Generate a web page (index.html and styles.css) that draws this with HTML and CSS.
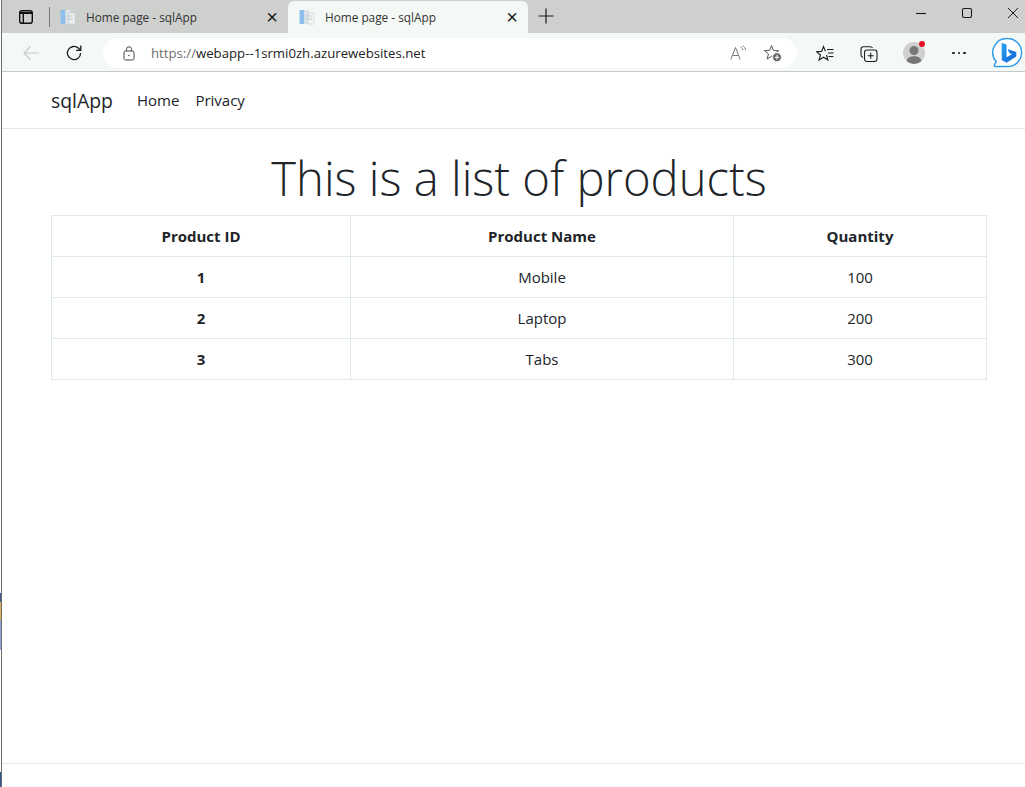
FILE: index.html
```html
<!DOCTYPE html>
<html lang="en">

<head>
  <meta charset="UTF-8" />
  <title>Home page - sqlApp</title>
  <link rel="stylesheet" href="styles.css">
</head>

<body>
  <div class="screen">
    <div class="desktop-edge"></div>

    <div class="browser">
      <!-- tabs -->
      <div class="tab-strip">
        <div class="tab-actions">
          <svg class="icon" width="16" height="16" viewBox="0 0 16 16" fill="none" stroke="#111" stroke-width="1.4">
            <rect x="1.7" y="1.7" width="12.6" height="12.6" rx="2.4" />
            <path d="M1.7 4h12.600" stroke-width="2" />
            <path d="M5.300 4.500v9.800" />
          </svg>
          <span class="tab-divider"></span>
        </div>

        <div class="tab">
          <svg class="favicon" width="16" height="16" viewBox="0 0 16 16">
            <rect x="0.5" y="1" width="5" height="14" fill="#8cc0ea" />
            <rect x="5.5" y="1" width="5" height="14" fill="#dde3e6" />
            <rect x="9" y="4" width="6" height="11" fill="#edf0f1" stroke="#c7ced2" stroke-width="0.6" />
            <path d="M7 7h6M7 10h6" stroke="#bcc5ca" stroke-width="1" />
          </svg>
          <span class="tab-title">Home page - sqlApp</span>
          <span class="tab-close">×</span>
        </div>

        <div class="tab tab-active">
          <svg class="favicon" width="16" height="16" viewBox="0 0 16 16">
            <rect x="0.5" y="1" width="5" height="14" fill="#8cc0ea" />
            <rect x="5.5" y="1" width="5" height="14" fill="#dde3e6" />
            <rect x="9" y="4" width="6" height="11" fill="#f4f6f7" stroke="#c7ced2" stroke-width="0.6" />
            <path d="M7 7h6M7 10h6" stroke="#bcc5ca" stroke-width="1" />
          </svg>
          <span class="tab-title">Home page - sqlApp</span>
          <span class="tab-close">×</span>
        </div>

        <svg class="new-tab" width="16" height="16" viewBox="0 0 16 16" stroke="#1b1b1b" stroke-width="1.2">
          <path d="M8 .5v15M.5 8h15" />
        </svg>

        <div class="window-controls">
          <svg width="12" height="12" viewBox="0 0 12 12" stroke="#1b1b1b" stroke-width="1.1"><path d="M1 6.500h10" /></svg>
          <svg width="12" height="12" viewBox="0 0 12 12" fill="none" stroke="#1b1b1b" stroke-width="1.1"><rect x="1.500" y="1.500" width="9" height="9" rx="1.500" /></svg>
          <svg width="12" height="12" viewBox="0 0 12 12" stroke="#1b1b1b" stroke-width="1"><path d="M1 1l10 10M11 1L1 11" /></svg>
        </div>
      </div>

      <!-- address bar -->
      <div class="toolbar">
        <svg class="nav-back" width="18" height="16" viewBox="0 0 18 16" fill="none" stroke="#c4c8c8" stroke-width="1.2">
          <path d="M17 8H2M8.500 1.500L2 8l6.500 6.500" />
        </svg>
        <svg class="nav-reload" width="18" height="18" viewBox="0 0 18 18" fill="none" stroke="#1b1b1b" stroke-width="1.3">
          <path d="M15.600 9a6.600 6.600 0 1 1-2-4.700l2 1.900" />
          <path d="M15.800 1.600v4.700h-4.700" />
        </svg>

        <div class="address-bar">
          <svg class="lock" width="12" height="15" viewBox="0 0 12 15" fill="none" stroke="#444" stroke-width="1">
            <rect x="1" y="5" width="10" height="9" rx="1.600" />
            <path d="M3.400 5V3.400a2.600 2.600 0 0 1 5.200 0V5" />
            <circle cx="6" cy="9.500" r=".8" fill="#444" stroke="none" />
          </svg>
          <span class="url"><span class="url-scheme">https://</span>webapp--1srmi0zh.azurewebsites.net</span>
          <span class="address-icons">
            <svg width="17" height="16" viewBox="0 0 17 16" fill="none" stroke="#777" stroke-width="1">
              <path d="M.8 14.500L5.500 2.500l4.700 12M2.500 10.500h6" />
              <path d="M10.500 1.800c1.400.7 2.200 1.900 2.400 3.400M12.800.8c1.600 1 2.600 2.500 2.800 4.300" />
            </svg>
            <svg width="18" height="18" viewBox="0 0 18 18" fill="none" stroke="#555" stroke-width="1">
              <path d="M7.500 1.500l1.900 4.900 5.200.3-4.100 3.300 1.400 5.100-4.400-2.900-4.400 2.900 1.400-5.100L.4 6.700l5.200-.3z" />
              <circle cx="13" cy="13.300" r="4.500" fill="#666" stroke="#f5f9f6" />
              <path d="M13 11v4.600M10.700 13.300h4.600" stroke="#fff" />
            </svg>
          </span>
        </div>

        <div class="toolbar-icons">
          <svg width="18" height="17" viewBox="0 0 18 17" fill="none" stroke="#1b1b1b" stroke-width="1.1">
            <path d="M10.500 10l1.400 5-4.400-2.800-4.400 2.800 1.400-5-4.100-3.300 5.200-.3 1.900-4.900 1.900 4.900" />
            <path d="M11 4.500h6.500M12 8h5.500M12.500 11.500h5" />
          </svg>
          <svg width="18" height="17" viewBox="0 0 18 17" fill="none" stroke="#1b1b1b" stroke-width="1.1">
            <path d="M3 12.500C1.600 12 1 11 1 10V4.200C1 2.700 2 1.700 3.500 1.700h6.800c1 0 1.800.5 2.200 1.300" />
            <rect x="4.500" y="5" width="12.500" height="11.500" rx="2.500" />
            <path d="M10.700 7.800v6M7.700 10.800h6" />
          </svg>
          <span class="avatar">
            <svg width="22" height="22" viewBox="0 0 22 22">
              <circle cx="11" cy="11" r="11" fill="#d0d0d0" />
              <circle cx="11" cy="8.500" r="4.500" fill="#767676" />
              <path d="M3.500 19c1-3.500 4-4.800 7.500-4.800s6.500 1.300 7.500 4.800a11 11 0 0 1-15 0z" fill="#767676" />
            </svg>
            <span class="avatar-dot"></span>
          </span>
          <span class="more-dots"><i></i><i></i><i></i></span>
        </div>

        <svg class="bing" width="31" height="32" viewBox="0 0 32 33">
          <defs>
            <linearGradient id="bing-fill" x1="0" y1="0" x2="1" y2="1">
              <stop offset="0" stop-color="#2aa4f0" />
              <stop offset="1" stop-color="#1160d8" />
            </linearGradient>
          </defs>
          <path d="M16 1.500a14.500 14.500 0 0 1 0 29H3.500c-1 0-1.500-1-1-1.800l1.800-3.300A14.500 14.500 0 0 1 16 1.500z" fill="#fff" stroke="#2f9bea" stroke-width="1.500" />
          <path d="M10 6l5 1.700v13.300l5.500-3.200-2.700-1.300-1.700-4.200 9 3.100v4.600L15 26.500l-5-2.800z" fill="url(#bing-fill)" />
        </svg>
      </div>

      <!-- page -->
      <header class="navbar">
        <a class="brand">sqlApp</a>
        <a class="nav-link">Home</a>
        <a class="nav-link">Privacy</a>
      </header>

      <main class="content">
        <h1>This is a list of products</h1>
        <table class="products">
          <thead>
            <tr>
              <th class="col-id">Product ID</th>
              <th class="col-name">Product Name</th>
              <th>Quantity</th>
            </tr>
          </thead>
          <tbody>
            <tr>
              <th>1</th>
              <td>Mobile</td>
              <td>100</td>
            </tr>
            <tr>
              <th>2</th>
              <td>Laptop</td>
              <td>200</td>
            </tr>
            <tr>
              <th>3</th>
              <td>Tabs</td>
              <td>300</td>
            </tr>
          </tbody>
        </table>
      </main>

      <footer class="page-footer"></footer>
    </div>
  </div>
</body>

</html>
```

FILE: styles.css
```css
* {
  box-sizing: border-box;
}

body {
  margin: 0;
  background: #fff;
  color: #212529;
  font-family: 'Open Sans', sans-serif;
  overflow: hidden;
}

.screen {
  display: flex;
  height: 787px;
}

.desktop-edge {
  width: 2px;
  flex: none;
  background: linear-gradient(#fff 0 593px, #3f5f9a 593px 602px, #e0b060 602px 620px, #8fa6d8 620px 650px, #fff 650px 772px, #2f5590 772px);
  border-right: 1px solid #6d6d6d;
}

.browser {
  flex: 1;
  min-width: 0;
  display: flex;
  flex-direction: column;
}

/* browser chrome */
.tab-strip {
  height: 33px;
  display: flex;
  align-items: flex-end;
  background: #cdd0cd;
}

.tab-actions {
  width: 56px;
  height: 33px;
  display: flex;
  align-items: center;
  padding-left: 16px;
  gap: 15px;
  flex: none;
}

.tab-divider {
  width: 1px;
  height: 20px;
  background: #77797a;
}

.tab {
  width: 230px;
  height: 33px;
  display: flex;
  align-items: center;
  padding: 0 10px 0 2px;
  font-size: 11.800px;
  color: #333;
  flex: none;
}

.tab-active {
  width: 240px;
  margin-top: 1px;
  height: 32px;
  padding-left: 11px;
  background: #f5f9f6;
  border-radius: 6px 6px 0 0;
}

.favicon {
  flex: none;
  margin-right: 10px;
}

.tab-title {
  flex: 1;
  white-space: nowrap;
}

.tab-close {
  font-family: 'Liberation Sans', sans-serif;
  font-size: 20px;
  line-height: 16px;
  color: #1b1b1b;
}

.new-tab {
  margin: 0 0 9px 10px;
  flex: none;
}

.window-controls {
  margin-left: auto;
  height: 33px;
  display: flex;
  align-items: flex-start;
  gap: 34px;
  padding: 7px 6px 0 0;
}

.toolbar {
  height: 39px;
  display: flex;
  align-items: center;
  background: #f5f9f6;
  border-bottom: 1px solid #c8cac8;
  padding-top: 2px;
}

.nav-back {
  margin-left: 20px;
  flex: none;
}

.nav-reload {
  margin-left: 25px;
  flex: none;
}

.address-bar {
  width: 694px;
  height: 30px;
  margin-left: 20px;
  padding: 0 15px 0 20px;
  display: flex;
  align-items: center;
  background: #fff;
  border-radius: 15px;
  flex: none;
}

.url {
  margin-left: 16px;
  font-size: 13.200px;
  color: #222;
  white-space: nowrap;
}

.url-scheme {
  color: #6f6f6f;
}

.address-icons {
  margin-left: auto;
  display: flex;
  align-items: center;
  gap: 17px;
}

.toolbar-icons {
  display: flex;
  align-items: center;
  margin-left: 19px;
  gap: 26px;
}

.avatar {
  position: relative;
  display: flex;
  margin: 0 1px 0 -1px;
}

.avatar-dot {
  position: absolute;
  top: -1px;
  right: 0;
  width: 6px;
  height: 6px;
  border-radius: 50%;
  background: #e81123;
}

.more-dots {
  display: flex;
  gap: 3px;
}

.more-dots i {
  width: 2.500px;
  height: 2.500px;
  border-radius: 50%;
  background: #1b1b1b;
}

.bing {
  margin-left: 26px;
  flex: none;
}

/* page */
.navbar {
  height: 57px;
  display: flex;
  align-items: center;
  padding-left: 49px;
  border-bottom: 1px solid #dee9e9;
  flex: none;
}

.brand {
  font-size: 19.400px;
  margin-right: 24px;
}

.nav-link {
  font-size: 15px;
  margin-right: 16px;
}

.content {
  flex: 1;
  padding: 0 38px 0 49px;
  text-align: center;
}

h1 {
  margin: 16px 0 4px;
  height: 66px;
  font-size: 47.200px;
  font-weight: 300;
  line-height: 66px;
}

.products {
  width: 936px;
  border-collapse: collapse;
  font-size: 15px;
}

.products th,
.products td {
  height: 41px;
  padding: 0 8px;
  border: 1px solid #dee9e9;
}

.products th {
  font-weight: 700;
}

.col-id {
  width: 299px;
}

.col-name {
  width: 383px;
}

.page-footer {
  height: 24px;
  border-top: 1px solid #dee9e9;
  flex: none;
}
```
